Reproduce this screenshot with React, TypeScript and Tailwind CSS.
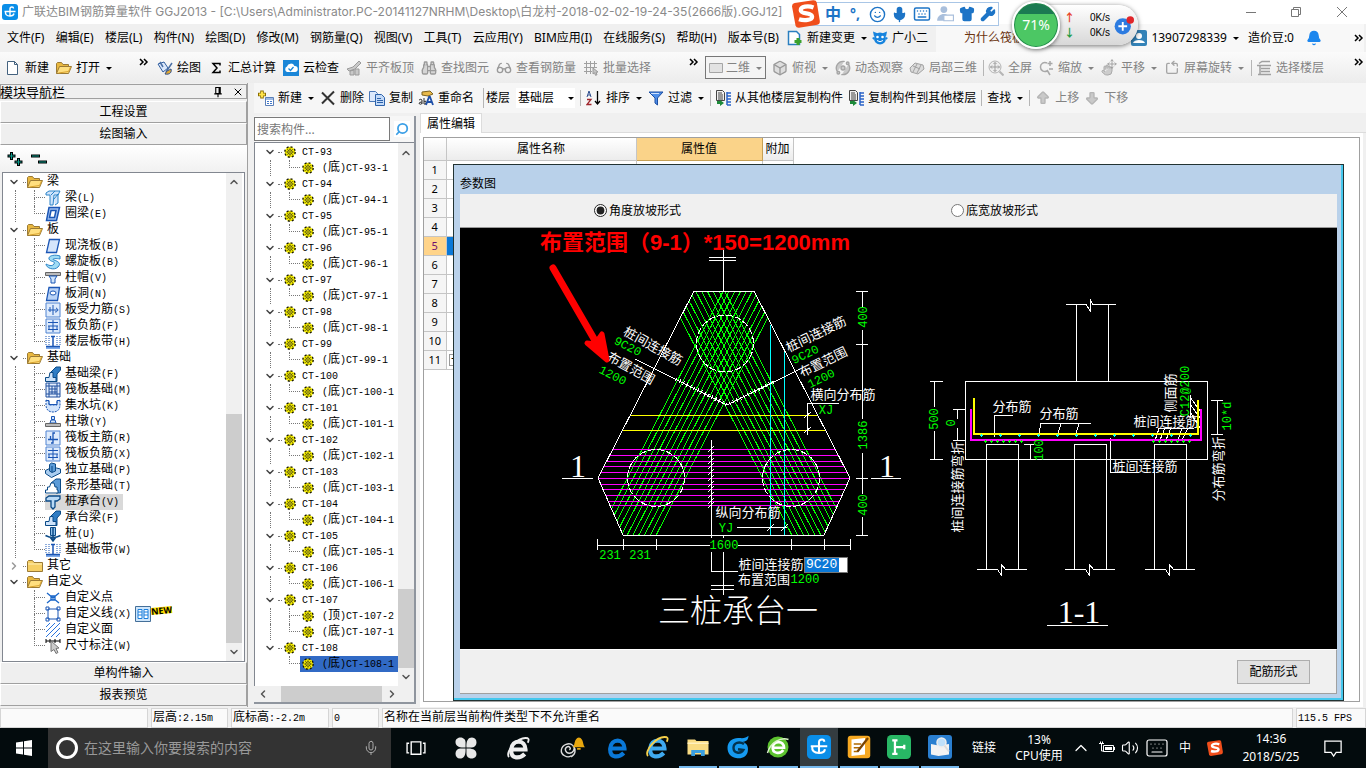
import type { ReactNode } from 'react';
import {
  ArrowBigDown,
  ArrowBigUp,
  Bell,
  Binoculars,
  Box,
  ChevronDown,
  ChevronLeft,
  ChevronRight,
  ChevronUp,
  Glasses,
  Hand,
  Keyboard,
  Mic,
  Move,
  Orbit,
  RotateCcwSquare,
  Search,
  Shirt,
  Smile,
  Volume2,
  Wrench,
  X,
} from 'lucide-react';

/* ---------- shared bits ---------- */

const Ico = ({ children, size = 16 }: { children: ReactNode; size?: number }) => (
  <svg width={size} height={size} viewBox="0 0 16 16" className="shrink-0" fill="none" aria-hidden="true">
    {children}
  </svg>
);

const Caret = () => (
  <svg width="9" height="8" viewBox="0 0 9 8" className="shrink-0" aria-hidden="true">
    <path d="M2 3h6L5 6z" fill="currentColor" />
  </svg>
);

const More = () => (
  <svg width="10" height="8" viewBox="0 0 10 8" className="shrink-0" fill="none" stroke="#000" strokeWidth="1.5" aria-hidden="true">
    <path d="M1 1l3 3-3 3M5 1l3 3-3 3" />
  </svg>
);

// Latin runs are set smaller so that they take half the width of a Chinese glyph.
const Mono = ({ text }: { text: string }) => (
  <span className="block whitespace-pre font-['Liberation_Mono','Noto_Sans_CJK_SC',monospace] text-xs leading-4">
    {text.split(/([ -~]+)/).map((part, i) =>
      /^[ -~]+$/.test(part) ? (
        <span key={i} className="text-[10px]">
          {part}
        </span>
      ) : (
        part
      ),
    )}
  </span>
);

interface ToolProps {
  icon?: ReactNode;
  label: string;
  muted?: boolean;
  caret?: boolean;
}

const Tool = ({ icon, label, muted, caret }: ToolProps) => (
  <button type="button" className={`flex shrink-0 items-center gap-1 whitespace-nowrap ${muted ? 'text-[#838383]' : 'text-black'}`}>
    {icon}
    <span>{label}</span>
    {caret && <Caret />}
  </button>
);

const Divider = () => <span className="h-4 w-px shrink-0 bg-[#b5b5b5]" />;

/* ---------- application icons ---------- */

const AppLogo = ({ size = 16 }: { size?: number }) => (
  <Ico size={size}>
    <rect width="16" height="16" rx="3" fill="#0a8ee8" />
    <path d="M2.5 7.5h11M8 12V5q0-2 2-2 1.500 0 1.500 1.500M3.500 7.500q-.5 4.500 4.500 4.500 3.500 0 4-2.500" stroke="#fff" strokeWidth="1.4" />
  </Ico>
);

const SogouLogo = ({ size = 28 }: { size?: number }) => (
  <Ico size={size}>
    <path d="M0 3.5Q0 2 1.5 1.7L12 .2Q13.800 0 14.200 1.500L15.900 12Q16 13.800 14.500 14.200L4 15.900Q2.400 16 2 14.500z" fill="#f04e1b" />
    <path d="M12.300 4.300C9 3 5 3.800 5 5.800c0 2.600 6.500 1 6.500 3.700 0 2-4.500 2.500-7.500 1.500" stroke="#fff" strokeWidth="2.400" />
  </Ico>
);

const NewDoc = () => (
  <Ico>
    <path d="M2.5 1.5h7l3 3v10h-10z" fill="#fff" stroke="#44627f" />
    <path d="M9.5 1.5v3h3" stroke="#44627f" />
  </Ico>
);

const OpenFolder = () => (
  <Ico>
    <path d="M.5 13.5v-10l1-1h4l1.5 2h5.5v3" fill="#e9b840" stroke="#9b7a35" />
    <path d="M.5 13.5l3-7h12l-3 7z" fill="#ffdf7f" stroke="#9b7a35" />
    <path d="M2.500 13l10-1.500 2-4.500" stroke="#d9a32e" />
  </Ico>
);

const ClosedFolder = () => (
  <Ico>
    <path d="M.5 13.5v-10l1-1h4l1.5 2h8.5v9z" fill="#f6cf64" stroke="#9b7a35" />
    <path d="M1 6h14" stroke="#fff0b8" />
  </Ico>
);

const Bucket = () => (
  <Ico>
    <path d="M1 4l6-2 4 6-5 4z" fill="#dbe8fb" stroke="#2f5d9f" />
    <path d="M3 2l3 5M15 3L9 12" stroke="#4a6fa5" strokeWidth="1.5" />
    <path d="M8 14c1-3 4-4 6-5 1 3-1 6-6 5z" fill="#e0a832" stroke="#31508a" />
  </Ico>
);

const CloudCheck = () => (
  <Ico>
    <rect width="16" height="16" fill="#1a86d8" />
    <path d="M4 12a3 3 0 010-5.500 4 4 0 017.500-.5 3 3 0 01.500 6z" fill="#fff" />
    <path d="M5.500 8.500l2 2 3-3.500" stroke="#1a86d8" strokeWidth="1.300" />
  </Ico>
);

const SlabTop = () => (
  <Ico>
    <path d="M1 9l6-2 6-6 2 2-6 6-6 2zM4 15v-4l4-1v5zM9 15V9h4v6z" fill="#c9c9c9" stroke="#9b9b9b" />
  </Ico>
);

const BatchGrid = () => (
  <Ico>
    <path d="M1 3.5h13M1 7.5h13M1 11.5h8M3.5 1v13M7.5 1v13M11.5 1v7" stroke="#a0a0a0" />
    <path d="M10 8l5 4-2 .3 1 2.500-1.500.500-1-2.500L10 14z" fill="#c5c5c5" stroke="#999" />
  </Ico>
);

const MagnifyMove = () => (
  <Ico>
    <circle cx="7" cy="7" r="6" stroke="#b5b5b5" fill="#eee" />
    <path d="M7 2.500v9M2.500 7h9M5.500 4L7 2.500 8.500 4M5.500 10L7 11.500 8.500 10M4 5.500L2.500 7 4 8.500M10 5.500L11.500 7 10 8.500" stroke="#9d9d9d" />
    <path d="M11.500 11.500l4 4" stroke="#b5b5b5" strokeWidth="2" />
  </Ico>
);

const StackLines = () => (
  <Ico>
    <path d="M3 3.500l3-2h8M1 5.500h14M5 8.500h9M5 11.500h9M2 14.500h13M4 6v8" stroke="#a0a0a0" strokeWidth="1.5" />
  </Ico>
);

const AddRow = () => (
  <Ico>
    <path d="M4 .500v8M0 4.500h8" stroke="#8a6d00" strokeWidth="3.500" />
    <path d="M4 1.500v6M1 4.500h6" stroke="#ffe34a" strokeWidth="2" />
    <path d="M7.500 7.500h8v8h-8z" fill="#fff" stroke="#5b7fb8" />
    <path d="M8 9h7M9 11.500h2M12 11.500h2M9 13.500h2M12 13.500h2" stroke="#3f76c9" />
  </Ico>
);

const CopyPages = () => (
  <Ico>
    <path d="M.5 1.5h6l2 2v8h-8z" fill="#dce9fc" stroke="#4a78b8" />
    <path d="M6.500 4.500h6l3 3v8h-9z" fill="#c3daf8" stroke="#2d62aa" />
    <path d="M8 8.500h4M8 10.500h6M8 12.500h6" stroke="#2d62aa" />
  </Ico>
);

const Rename = () => (
  <Ico>
    <path d="M4 2l8-1 3 3-5 2-6-1z" fill="#e8b94a" stroke="#7b611f" />
    <path d="M1 10q2-1.500 3 0v4M4 12q-3 0-3 1.500Q2.500 15 4 13.500M6 8v6q2 1 2-1.500T6 11.500" stroke="#333" />
    <path d="M8 15l3-8h1l3 8M9 12h5" stroke="#1e4fa8" strokeWidth="1.800" />
  </Ico>
);

const SortAz = () => (
  <Ico>
    <path d="M1 7l2-6 2 6M2 5h2.500" stroke="#2e4e8e" />
    <path d="M1 9.500h4l-4 5h4.500" stroke="#a0262c" strokeWidth="1.300" />
    <path d="M11.500 1v12M9 11l2.500 3L14 11" stroke="#000" strokeWidth="1.300" />
  </Ico>
);

const Funnel = () => (
  <Ico>
    <path d="M1 2h14l-5.500 6v7L7 13V8z" fill="#4d8de8" stroke="#1c4fa3" />
    <path d="M3 3.500h8" stroke="#cfe2ff" />
  </Ico>
);

const FloorCopy = () => (
  <Ico>
    <path d="M1.500.5h6l2 2v8h-8z" fill="#eee" stroke="#444" />
    <path d="M3 3h4M3 5h5M3 7h5M3 9h5" stroke="#444" />
    <path d="M12 2v13M12 3h4M12 6h4M12 9h4M12 12h4M12 15h4" stroke="#2a63c8" strokeWidth="1.500" />
    <path d="M2 11v3h3v2l4-3-4-3v1z" fill="#1d8a3a" />
  </Ico>
);

const Gear = () => (
  <svg width="12" height="12" viewBox="0 0 12 12" className="shrink-0" fill="none" aria-hidden="true">
    <circle cx="6" cy="6" r="5.2" fill="#f6ee00" stroke="#1a1900" strokeWidth="1.4" strokeDasharray="2 2.080" />
    <path d="M6 1.500v9M1.500 6h9M3 3l6 6M9 3l-6 6" stroke="#4d4a00" strokeWidth=".6" />
    <circle cx="6" cy="6" r="2.200" fill="#fff600" stroke="#222" strokeWidth=".8" />
    <circle cx="6" cy="6" r=".8" fill="#222" />
  </svg>
);

const Battery = () => (
  <Ico>
    <path d="M4.500 5.500h10v6h-10z" stroke="#fff" />
    <path d="M6 7h7v3H6zM15 7h1v3h-1z" fill="#fff" />
    <path d="M0 3.500h5M1.500 1.500v2M3.500 1.500v2M2.500 4v7H5" stroke="#fff" />
  </Ico>
);

const B = '#1b56b5';

const TREE_ICONS: Record<string, ReactNode> = {
  beam: <path d="M1 3l3-2h11l-2 4H9l-1 10H5V5H1zM6 5l4-4M9 9l4-5v9l-3 2" fill="#cfe4fb" stroke="#2c84c8" />,
  ring: <path d="M4 1.500h10.500l-3 13H1.500zM6 4.500h5l-1.500 7h-5z" fill="#9fc0f2" fillRule="evenodd" stroke={B} strokeWidth="1.500" />,
  slab: <path d="M4.500 1.500h10l-3 13h-10z" fill="#d5e5fb" stroke={B} strokeWidth="1.300" />,
  spiral: <path d="M15 2C9 0 3 2 4 5s7 2 5 5-6 1-8 0c0 4 8 7 12 3s-1-6-4-7 1-2 6-1z" fill="#9fdcf5" stroke="#2c84c8" />,
  cap: (
    <>
      <path d="M.5 2.500h15v3H.5z" fill="#bbb" stroke="#666" />
      <path d="M4 6h8l-2 3v4H6V9z" fill="#cfe4fb" stroke={B} />
    </>
  ),
  hole: (
    <>
      <path d="M4 1.500h10.500l-2 13h-11z" fill="#b9d3f7" stroke={B} strokeWidth="1.300" />
      <ellipse cx="8" cy="7" rx="3" ry="2" fill="#fff" stroke={B} />
    </>
  ),
  bar: (
    <>
      <path d="M1 1h14v14H1z" fill="#deebfc" stroke="#4f83d1" />
      <path d="M3 8h10M5 5v5M8 3v10M11 6c3 1 2 4-1 4" stroke={B} />
    </>
  ),
  main: (
    <>
      <path d="M1 1h14v14H1z" fill="#deebfc" stroke="#4f83d1" />
      <path d="M3 9.500h10M5.500 6v3.500M10 3H8v10H6" stroke={B} strokeWidth="1.300" />
    </>
  ),
  neg: (
    <>
      <path d="M1 1h14v14H1z" fill="#deebfc" stroke="#4f83d1" />
      <path d="M3 4.500h10M3 11.500h10M3 8h10M8 2v12M4 8v3M12 8v3" stroke={B} />
    </>
  ),
  band: (
    <>
      <path d="M1 12h14v3H1z" fill="#7faae8" />
      <path d="M1 2v10M4 2v10M12 2v10M15 2v10" stroke={B} strokeDasharray="1 1" />
      <path d="M8 2v10M6 2.500h4M1 12.500h14" stroke={B} strokeWidth="1.500" />
    </>
  ),
  found: (
    <>
      <path d="M5 7l6-6h4.500v3L12 8v7.500H8z" fill="#2f7cc4" stroke="#0b4a86" />
      <path d="M.5 15.500v-4H4l1-5h3v5h3v4z" fill="#cfe4fb" stroke="#0b4a86" />
    </>
  ),
  raft: <path d="M1 1h14v14H1zM4 1v14M12 1v14M1 4h14M1 12h14M7 4v8M10 4v8M4 7h8M4 10h8" fill="#e3eefd" stroke="#1f4f9e" />,
  pit: (
    <>
      <path d="M1 2v5c0 5 3 7 7 7s7-2 7-7V2l-3 1v4H4V3z" fill="#d2e4fb" stroke={B} strokeDasharray="2 1" />
      <path d="M1 2.500h3v4h8v-4h3" stroke={B} />
    </>
  ),
  pier: (
    <>
      <path d="M5 9l1-3h4l1 3zM6.500 2.500h3v3h-3z" fill="#cfe4fb" stroke={B} />
      <path d="M.5 9.500h15v3H.5z" fill="#bbb" stroke="#666" />
    </>
  ),
  pad: (
    <>
      <path d="M.5 8.500l5-2.500h6l4 1v4l-9 4.500-6-4z" fill="#a9cdf0" stroke="#0b4a86" />
      <path d="M4.500 9V2.500l2-1.500 4 1V9L7 10.500zM7 4v6" fill="#5b9bd8" stroke="#0b4a86" />
    </>
  ),
  strip: (
    <>
      <path d="M6 5l5-4h4.500v14H11z" fill="#5b9bd8" stroke="#0b4a86" />
      <path d="M.5 15v-3h2V9h2l1.500-4h3l1 4h2v3h1v3z" fill="#fff" stroke="#0b4a86" />
    </>
  ),
  pile: <path d="M1 4l3-2h11v3l-3 2h-2v6l-2 2-2-2V7H1z" fill="#b9d9f5" stroke="#0b4a86" strokeWidth="1.300" />,
  drop: (
    <>
      <path d="M5.500 1.500h5v8h-5z" fill="#8cc0ec" stroke="#0b4a86" />
      <path d="M8 1v14M.5 9.500q7.500 4 15 0M5 11l3 4 3-4" stroke="#0b4a86" strokeWidth="1.500" />
    </>
  ),
  point: <path d="M2 3l12 10M14 3L2 13M6 6h4v4H6z" stroke="#1b67c9" strokeWidth="1.300" />,
  line: <path d="M3 3h10v10H3zM1 1h3v3H1zM12 1h3v3h-3zM1 12h3v3H1zM12 12h3v3h-3z" fill="#fff" stroke={B} />,
  face: <path d="M1 5l4-4M1 10l9-9M1 15L15 1M6 15l9-9M11 15l4-4" stroke="#2a74dd" />,
  dim: (
    <>
      <path d="M1 1v4M15 1v4M1 3h14M5 1v4M10 1v4" stroke="#000" />
      <path d="M6 3l8 7-3 .5 2 4-2 1-2-4-3 2z" fill="#ccc" stroke="#777" />
    </>
  ),
};

/* ---------- data ---------- */

const MENUS = ['文件(F)', '编辑(E)', '楼层(L)', '构件(N)', '绘图(D)', '修改(M)', '钢筋量(Q)', '视图(V)', '工具(T)', '云应用(Y)', 'BIM应用(I)', '在线服务(S)', '帮助(H)', '版本号(B)'];

interface TreeGroup {
  name: string;
  open: boolean;
  items: [string, string][];
}

const TREE: TreeGroup[] = [
  { name: '梁', open: true, items: [['梁(L)', 'beam'], ['圈梁(E)', 'ring']] },
  {
    name: '板',
    open: true,
    items: [['现浇板(B)', 'slab'], ['螺旋板(B)', 'spiral'], ['柱帽(V)', 'cap'], ['板洞(N)', 'hole'], ['板受力筋(S)', 'bar'], ['板负筋(F)', 'neg'], ['楼层板带(H)', 'band']],
  },
  {
    name: '基础',
    open: true,
    items: [
      ['基础梁(F)', 'found'],
      ['筏板基础(M)', 'raft'],
      ['集水坑(K)', 'pit'],
      ['柱墩(Y)', 'pier'],
      ['筏板主筋(R)', 'main'],
      ['筏板负筋(X)', 'neg'],
      ['独立基础(P)', 'pad'],
      ['条形基础(T)', 'strip'],
      ['桩承台(V)', 'pile'],
      ['承台梁(F)', 'found'],
      ['桩(U)', 'drop'],
      ['基础板带(W)', 'band'],
    ],
  },
  { name: '其它', open: false, items: [] },
  { name: '自定义', open: true, items: [['自定义点', 'point'], ['自定义线(X)', 'line'], ['自定义面', 'face'], ['尺寸标注(W)', 'dim']] },
];

const COMPONENTS = Array.from({ length: 16 }, (_, i) => {
  const name = `CT-${93 + i}`;
  return { name, children: name === 'CT-107' ? [`(顶)${name}-2`, `(底)${name}-1`] : [`(底)${name}-1`] };
});

/* ---------- title, menu and tool bars ---------- */

const TitleBar = () => (
  <div className="flex h-6 shrink-0 items-center bg-white pl-0.5">
    <AppLogo />
    <h1 className="ml-1 flex-1 truncate font-['Inter','Noto_Sans_CJK_SC',sans-serif] text-xs text-[#8a8a8a]">
      广联达BIM钢筋算量软件 GGJ2013 - [C:\Users\Administrator.PC-20141127NRHM\Desktop\白龙村-2018-02-02-19-24-35(2666版).GGJ12]
    </h1>
    <div className="flex text-[#777]">
      <button type="button" aria-label="最小化" className="flex w-[45px] justify-center">
        <Ico><path d="M3 8.5h10" stroke="currentColor" /></Ico>
      </button>
      <button type="button" aria-label="还原" className="flex w-[45px] justify-center">
        <Ico><path d="M3.5 5.5h7v7h-7zM5.5 5.5v-2h7v7h-2" stroke="currentColor" /></Ico>
      </button>
      <button type="button" aria-label="关闭" className="flex w-12 justify-center">
        <Ico><path d="M3 3l10 10M13 3L3 13" stroke="currentColor" /></Ico>
      </button>
    </div>
  </div>
);

const MenuBar = () => (
  <div className="flex h-7 shrink-0 items-center whitespace-nowrap pl-[7px] pr-0.5 text-xs">
    <nav className="flex w-[780px] shrink-0 justify-between pr-2">
      {MENUS.map((m) => (
        <button key={m} type="button">{m}</button>
      ))}
    </nav>
    <div className="flex items-center gap-1">
      <Tool
        caret
        label="新建变更"
        icon={
          <Ico>
            <path d="M1.5 1.5h8l3 3v10h-11z" fill="#fff" stroke="#2a7fc0" strokeWidth="1.5" />
            <path d="M11 8v7M7.5 11.5h7" stroke="#3ba22c" strokeWidth="3" />
          </Ico>
        }
      />
      <Tool
        label="广小二"
        icon={
          <Ico>
            <circle cx="8" cy="8.500" r="6" fill="#1683dd" />
            <path d="M1 1.500l5 2-4 3zM15 1.500l-5 2 4 3zM0 8l2-1v3zM16 8l-2-1v3z" fill="#1683dd" />
            <circle cx="5.500" cy="7" r="1.300" fill="#fff" />
            <circle cx="10.500" cy="7" r="1.300" fill="#fff" />
            <path d="M5 10.500q3 2.500 6 0" stroke="#fff" />
          </Ico>
        }
      />
    </div>
    <div className="ml-2 flex h-full flex-1 items-center bg-[#f8f8f8] pl-7">
      <a href="#tips" className="text-[#6b3410]">为什么筏板</a>
    </div>
    <div className="flex h-full items-center gap-1 bg-[#f8f8f8]">
      <Tool
        caret
        label="13907298339"
        icon={
          <Ico>
            <rect width="16" height="16" rx="2" fill="#3483b8" />
            <path d="M2 13c1-4 11-4 12 0zM8 3a3 3 0 010 6 3 3 0 010-6z" fill="#fff" />
          </Ico>
        }
      />
      <span className="ml-1">造价豆:0</span>
      <Bell className="ml-2 size-4 fill-[#1b86ee] text-[#1b86ee]" />
      <span className="ml-7"><More /></span>
    </div>
  </div>
);

const ToolBar = () => (
  <div className="flex h-[31px] shrink-0 items-center overflow-hidden bg-gradient-to-b from-[#fbfbfb] to-[#ececec] text-xs">
    <div className="flex w-[157px] shrink-0 items-center gap-[7px] pl-[5px]">
      <Tool label="新建" icon={<NewDoc />} />
      <Tool label="打开" icon={<OpenFolder />} caret />
      <span className="ml-auto mr-2 mb-3"><More /></span>
    </div>
    <div className="flex w-[548px] shrink-0 items-center gap-[7px]">
      <Tool label="绘图" icon={<Bucket />} />
      <Tool label="汇总计算" icon={<Ico><path d="M12 5.500V3.500H5L9 8l-4 4.500h7v-2" stroke="#000" strokeWidth="1.500" /></Ico>} />
      <Tool label="云检查" icon={<CloudCheck />} />
      <Tool muted label="平齐板顶" icon={<SlabTop />} />
      <Tool muted label="查找图元" icon={<Binoculars className="size-4 fill-[#d5d5d5] text-[#9a9a9a]" />} />
      <Tool muted label="查看钢筋量" icon={<Glasses className="size-4 text-[#9a9a9a]" />} />
      <Tool muted label="批量选择" icon={<BatchGrid />} />
      <span className="ml-auto mr-[6px] mb-3"><More /></span>
    </div>
    <div className="flex flex-1 items-center gap-1.5 whitespace-nowrap">
      <button type="button" className="flex h-[23px] w-[61px] shrink-0 items-center border border-[#777] bg-[#f4f4f4] pl-0.5 text-[#838383]">
        <Ico><path d="M1.5 3.5h13v9h-13z" fill="#e2e2e2" stroke="#a5a5a5" /></Ico>
        <span className="ml-0.5 mr-1">二维</span>
        <Caret />
      </button>
      <Tool muted caret label="俯视" icon={<Box className="size-4 fill-[#dedede] text-[#9a9a9a]" />} />
      <Tool muted label="动态观察" icon={<Orbit className="size-4 fill-[#c9c9c9] text-[#a5a5a5]" />} />
      <Tool
        muted
        label="局部三维"
        icon={<Ico><path d="M1 8l5-5 8 2 1 4-6 5-7-2zM4 6l7 3M8 4l-4 8M12 5L8 13" fill="#dcdcdc" stroke="#a2a2a2" /></Ico>}
      />
      <div className="flex border-l border-[#b5b5b5] pl-1">
        <Tool muted label="全屏" icon={<MagnifyMove />} />
      </div>
      <Tool
        muted
        caret
        label="缩放"
        icon={<Ico><path d="M9 11a4.500 4.500 0 110-8M9 10l3 5M12 1v5M9.500 3.500h5M11 9h4" stroke="#a8a8a8" strokeWidth="1.500" /></Ico>}
      />
      <Tool
        muted
        caret
        label="平移"
        icon={
          <span className="relative flex size-4">
            <Hand className="mt-1 size-3 fill-[#ccc] text-[#aaa]" />
            <Move className="absolute -top-px right-0 size-2.5 text-[#999]" />
          </span>
        }
      />
      <Tool muted caret label="屏幕旋转" icon={<RotateCcwSquare className="size-4 text-[#a5a5a5]" />} />
      <div className="flex border-l border-[#b5b5b5] pl-1">
        <Tool muted label="选择楼层" icon={<StackLines />} />
      </div>
      <span className="ml-auto mr-0.5 mb-3"><More /></span>
    </div>
  </div>
);

const ComponentBar = () => (
  <div className="flex h-[30px] shrink-0 items-center gap-[5px] overflow-hidden bg-[#f6f6f6] pl-1 text-xs">
    <Tool caret label="新建" icon={<AddRow />} />
    <Tool label="删除" icon={<Ico><path d="M2 2.5l12 12M14 1.5l-12 12" stroke="#333" strokeWidth="2" /></Ico>} />
    <Tool label="复制" icon={<CopyPages />} />
    <Tool label="重命名" icon={<Rename />} />
    <label className="ml-1 flex shrink-0 items-center gap-1.5 border-l border-[#b5b5b5] pl-0.5">
      楼层
      <span className="flex h-5 items-center bg-white">
        <select defaultValue="基础层" className="w-[50px] appearance-none bg-white pl-0.5 text-xs outline-none">
          <option>基础层</option>
        </select>
        <Caret />
      </span>
    </label>
    <Divider />
    <Tool caret label="排序" icon={<SortAz />} />
    <Tool caret label="过滤" icon={<Funnel />} />
    <div className="flex border-l border-[#b5b5b5] pl-1">
      <Tool label="从其他楼层复制构件" icon={<FloorCopy />} />
    </div>
    <Tool label="复制构件到其他楼层" icon={<FloorCopy />} />
    <Divider />
    <Tool caret label="查找" />
    <Divider />
    <Tool muted label="上移" icon={<ArrowBigUp className="size-4 fill-[#c9c9c9] text-[#b5b5b5]" />} />
    <Tool muted label="下移" icon={<ArrowBigDown className="size-4 fill-[#c9c9c9] text-[#b5b5b5]" />} />
  </div>
);

/* ---------- left navigation ---------- */

const NavButton = ({ label }: { label: string }) => (
  <button type="button" className="h-[22px] w-full shrink-0 border border-[#a0a0a0] border-l-white border-t-white bg-[#efefef] text-xs leading-5">
    {label}
  </button>
);

const Elbow = ({ last }: { last: boolean }) => (
  <span className="flex h-4 w-[11px] shrink-0 flex-col">
    <span className="h-2 border-b border-l border-dotted border-[#777]" />
    <span className={`h-2 ${last ? '' : 'border-l border-dotted border-[#777]'}`} />
  </span>
);

const NavTree = () => (
  <ul className="min-w-0 flex-1 overflow-hidden pt-px">
    {TREE.map((group, gi) => (
      <li key={group.name}>
        <div className="flex h-4 items-center pl-[5px]">
          {group.open ? <ChevronDown className="size-3 text-[#444]" strokeWidth={3} /> : <ChevronRight className="size-3 text-[#999]" strokeWidth={3} />}
          <span className="ml-[3px] mr-px h-px w-[3px] border-b border-dotted border-[#777]" />
          <div className="flex gap-1">
            {group.open ? <OpenFolder /> : <ClosedFolder />}
            <Mono text={group.name} />
          </div>
        </div>
        <ul>
          {group.items.map(([label, icon], i) => (
            <li key={label} className="flex h-4 items-center pl-3">
              <span className={`h-4 w-[19px] shrink-0 ${gi < 3 ? 'border-l border-dotted border-[#777]' : ''}`} />
              <Elbow last={i === group.items.length - 1} />
              <button type="button" className={`flex h-4 items-center gap-1 pr-1 ${label === '桩承台(V)' ? 'bg-[#d9d9d9]' : ''}`}>
                <Ico>{TREE_ICONS[icon]}</Ico>
                <Mono text={label} />
              </button>
              {label === '自定义线(X)' && (
                <>
                  <Ico>
                    <path d="M.5.5h15v15H.5z" fill="#cfe6fb" stroke="#446f99" />
                    <path d="M3 3.5h4v9H3zM9 3.5h4v9H9zM3 6h4M3 9h4M9 6h4M9 9h4" stroke="#1b7fdc" fill="#fff" />
                  </Ico>
                  <span className="mb-2 -rotate-6 bg-[#ffdf00] text-[9px] leading-[7px] font-bold">NEW</span>
                </>
              )}
            </li>
          ))}
        </ul>
      </li>
    ))}
  </ul>
);

const LeftNav = () => (
  <aside className="flex w-[248px] shrink-0 flex-col border-r border-[#a0a0a0] bg-[#f0f0f0] pt-px">
    <header className="mb-0.5 flex h-[15px] items-center border border-[#a0a0a0] text-[13px] leading-3">
      <h2 className="-ml-px flex-1">模块导航栏</h2>
      <button type="button" aria-label="固定" className="mr-2">
        <Ico size={12}><path d="M5 2h6v8H5zM9.5 2v8M3 10.5h10M8 10v5" stroke="#000" strokeWidth="1.5" /></Ico>
      </button>
      <button type="button" aria-label="关闭导航" className="mr-0.5"><X className="size-3" strokeWidth={2} /></button>
    </header>
    <NavButton label="工程设置" />
    <NavButton label="绘图输入" />
    <div className="flex h-[27px] shrink-0 items-center gap-2 bg-gradient-to-b from-white to-[#f1f1f1] pl-[7px]">
      <button type="button" aria-label="全部展开">
        <Ico><path d="M4.5 1v8M.5 5h8M11.5 7v8M7.5 11h8" stroke="#000" strokeWidth="3" /><path d="M4.5 2v6M1.5 5h6M11.5 8v6M8.5 11h6" stroke="#0a9a8a" /></Ico>
      </button>
      <button type="button" aria-label="全部折叠">
        <Ico><path d="M0 5h9M7 11h9" stroke="#000" strokeWidth="3" /><path d="M1 5h7M8 11h7" stroke="#0a9a8a" /></Ico>
      </button>
    </div>
    <div className="mx-0.5 flex min-h-0 flex-1 border border-[#828790] bg-white">
      <NavTree />
      <div className="mr-0.5 flex w-4 shrink-0 flex-col items-center bg-[#f0f0f0]">
        <ChevronUp className="my-[3px] size-3 text-[#555]" strokeWidth={3} />
        <div className="flex-1" />
        <div className="h-[229px] w-full bg-[#cdcdcd]" />
        <ChevronDown className="my-[3px] size-3 text-[#555]" strokeWidth={3} />
      </div>
    </div>
    <NavButton label="单构件输入" />
    <NavButton label="报表预览" />
    <div className="h-px" />
  </aside>
);

/* ---------- component list ---------- */

const ComponentList = () => (
  <section className="mt-[3px] mb-[3px] flex w-[162px] shrink-0 flex-col border-r-2 border-b-2 border-[#8f959e] bg-white">
    <div className="flex h-[26px] shrink-0 items-center bg-[#f6f6f6]">
      <input aria-label="搜索构件" placeholder="搜索构件..." className="h-6 w-[136px] border border-[#7a7a7a] bg-white px-0.5 text-xs outline-none placeholder:text-[#777]" />
      <button type="button" aria-label="搜索" className="mx-auto bg-white p-px">
        <Search className="size-[14px] -scale-x-100 text-[#3b9fe6]" strokeWidth={3} />
      </button>
    </div>
    <div className="flex min-h-0 flex-1 border border-r-0 border-b-0 border-[#828790]">
      <ul className="min-w-0 flex-1 overflow-hidden pt-px">
        {COMPONENTS.map((c, ci) => (
          <li key={c.name}>
            <div className="flex h-4 items-center pl-[9px]">
              <ChevronDown className="size-3 text-[#444]" strokeWidth={3} />
              <span className="mx-0.5 h-px w-1 border-b border-dotted border-[#777]" />
              <div className="flex items-center gap-[6px]">
                <Gear />
                <Mono text={c.name} />
              </div>
            </div>
            {c.children.map((child, i) => {
              const selected = ci === COMPONENTS.length - 1;
              return (
                <div key={child} className="flex h-4 items-center pl-[15px]">
                  <span className={`h-4 w-[19px] shrink-0 ${selected ? '' : 'border-l border-dotted border-[#777]'}`} />
                  <Elbow last={i === c.children.length - 1} />
                  <button type="button" className={`flex h-4 flex-1 items-center gap-2 pl-0.5 ${selected ? 'bg-[#316ac5]' : ''}`}>
                    <Gear />
                    <Mono text={child} />
                  </button>
                </div>
              );
            })}
          </li>
        ))}
      </ul>
      <div className="flex w-4 shrink-0 flex-col items-center bg-[#f0f0f0]">
        <ChevronUp className="my-1 size-3 text-[#555]" strokeWidth={3} />
        <div className="flex-1" />
        <div className="h-[79px] w-full bg-[#cdcdcd]" />
        <ChevronDown className="my-[3px] size-3 text-[#555]" strokeWidth={3} />
      </div>
    </div>
    <div className="flex h-4 shrink-0 items-center bg-[#f0f0f0] pl-[3px] pr-4">
      <ChevronLeft className="mr-3 size-3 text-[#555]" strokeWidth={3} />
      <div className="h-full flex-1 bg-[#cdcdcd]" />
      <ChevronRight className="ml-1 size-3 text-[#555]" strokeWidth={3} />
    </div>
  </section>
);

/* ---------- parameter drawing ---------- */

const GREEN = '#00ff00';

interface LabelProps {
  x: number;
  y: number;
  children: string;
  fill?: string;
  size?: number;
  rotate?: number;
}

// Centred text on the drawing; y is the middle of the glyphs.
const Label = ({ x, y, children, fill = '#fff', size = 13, rotate = 0 }: LabelProps) => (
  <text
    x={x}
    y={y + size * 0.36}
    fontSize={size}
    fill={fill}
    textAnchor="middle"
    transform={rotate ? `rotate(${rotate} ${x} ${y})` : undefined}
    stroke="none"
  >
    {children}
  </text>
);

const OUTLINE = '694,291 754,291 850,478 824,535 623,535 598,478';
const HATCH = Array.from({ length: 11 }, (_, i) => 652 + i * 5.8);
const RINGS = [449, 455, 461, 466, 472, 478, 484, 489, 495, 501, 505];

const PlanView = () => (
  <g>
    <clipPath id="cap-outline">
      <polygon points={OUTLINE} />
    </clipPath>
    <g clipPath="url(#cap-outline)">
      {HATCH.map((x) => (
        <g key={x} stroke={GREEN}>
          <path d={`M${x - 62} 551L${x + 77} 280`} />
          <path d={`M${1448 - x + 62} 551L${1448 - x - 77} 280`} />
        </g>
      ))}
      {RINGS.map((y) => (
        <path key={y} d={`M590 ${y + 0.5}H860`} stroke="#ff00ff" />
      ))}
    </g>
    <path d="M630 415.5H818" stroke="#ffff00" />
    <path d="M622 430.5H826" stroke="#ffff00" />
    <path d="M770.5 325V535M784.5 351V535" stroke="#00ffff" />
    <g stroke="#fff">
      <polygon points={OUTLINE} />
      <circle cx="725" cy="343.5" r="28.5" strokeDasharray="7 2" />
      <circle cx="656" cy="478" r="28.5" strokeDasharray="7 2" />
      <circle cx="791" cy="478" r="28.5" strokeDasharray="7 2" />
      <path d="M723.5 250V291M709 257.5H736M709 260.5H736" />
      <path d="M635 359L727 405L800 369" />
      <path d="M676 379L727 405L773 382" strokeWidth="4" strokeDasharray="1 3" />
      <path d="M711.5 440V538M711.5 552V571.5H738M723.5 535V538M723.5 552V595M711 585.5H734M711 589.5H734" />
      {RINGS.map((y) => (
        <path key={y} d={`M708 ${y + 3}l6 -6`} />
      ))}
      <path d="M562 478.5H593M871 478.5H901" />
      <path d="M862.5 291V307M862.5 330V419M862.5 453V494M862.5 517V535" />
      <path d="M856 291.5H868M856 344.5H868M856 478.5H868M856 535.5H868" />
      <path d="M597 545.5H710M738 545.5H850M597.5 539V550M623.5 539V550M656.5 539V550M791.5 539V550M824.5 539V550M850.5 539V550" />
      <path d="M839 403.5H807.5V435M804 418l7-6M804 433l7-6M737 527.5H787M767 531l7-7M781 531l7-7" />
    </g>
    <Label x={653} y={346} rotate={29}>桩间连接筋</Label>
    <Label x={628} y={346} rotate={27} fill={GREEN} size={12}>9C20</Label>
    <Label x={631} y={368} rotate={29}>布置范围</Label>
    <Label x={613} y={375} rotate={27} fill={GREEN} size={12}>1200</Label>
    <Label x={816} y={334} rotate={-26}>桩间连接筋</Label>
    <Label x={805} y={354} rotate={-26} fill={GREEN} size={12}>9C20</Label>
    <Label x={823} y={362} rotate={-26}>布置范围</Label>
    <Label x={821} y={378} rotate={-26} fill={GREEN} size={12}>1200</Label>
    <Label x={843} y={394}>横向分布筋</Label>
    <Label x={826} y={410} fill={GREEN} size={12}>XJ</Label>
    <Label x={748} y={512}>纵向分布筋</Label>
    <Label x={726} y={528} fill={GREEN} size={12}>YJ</Label>
    <Label x={863} y={317} rotate={-90} fill={GREEN} size={12}>400</Label>
    <Label x={863} y={435} rotate={-90} fill={GREEN} size={12}>1386</Label>
    <Label x={863} y={505} rotate={-90} fill={GREEN} size={12}>400</Label>
    <Label x={724} y={545} fill={GREEN} size={12}>1600</Label>
    <Label x={610} y={555} fill={GREEN} size={12}>231</Label>
    <Label x={640} y={555} fill={GREEN} size={12}>231</Label>
    <Label x={771} y={564}>桩间连接筋</Label>
    <Label x={764} y={579}>布置范围</Label>
    <Label x={805} y={579} fill={GREEN} size={12}>1200</Label>
    <g fontFamily="Liberation Serif, serif">
      <Label x={578} y={465} size={32}>1</Label>
      <Label x={887} y={465} size={32}>1</Label>
    </g>
    <g fontWeight="300">
      <Label x={738} y={610} size={32}>三桩承台一</Label>
    </g>
  </g>
);

const SectionView = () => (
  <g>
    <g stroke="#fff">
      <path d="M1076.5 304V381M1108.5 304V381M1066 304.5H1086l4 6v-11l3 5H1116" />
      <path d="M965.5 381.5H1207.5V459.5H965.5z" />
      {[986.5, 1074.5, 1154.5].map((x) => (
        <g key={x}>
          <path d={`M${x} 569V444.5h32V569`} />
          <path d={`M${x - 10} 569.5h21l4 6v-11l4 5h21`} />
        </g>
      ))}
      <path d="M934.5 381V407M934.5 431V460M930 381.5H943M930 459.5H943" />
      <path d="M957.5 409V419M957.5 428V440M953 409.5H965M953 440.5H965" />
      <path d="M1030.5 444V460M1024 444.5H1034M1024 459.5H1034" />
      <path d="M1217.5 400V434M1211 400.5H1223M1211 434.5H1223" />
      <path d="M994.5 437V415.5H1013M1039 434l2-11H1091M1058 434l3-11M1076 434l3-11" />
      <path d="M1110.5 438V472.5H1139" />
      <path d="M1194 428.5H1159l-4 12M1165 428l-5 12M1171 428l-5 12M1182 428l-4 12M1188 428l-6 12" />
      <path d="M1190.5 395V418M1190 397l10 14M1190 404l10 14M1190 412l10 16" />
    </g>
    <path d="M974 398V434H1198V400" stroke="#ffff00" strokeWidth="2" />
    <path d="M971 409V440H1201V409" stroke="#ff00ff" strokeWidth="2" />
    {Array.from({ length: 12 }, (_, i) => (
      <path key={i} d={`M${980 + i * 19} 435.5h3M${981.5 + i * 19} 434v3`} stroke="#00ffff" />
    ))}
    {Array.from({ length: 7 }, (_, i) => (
      <path key={i} d={`M${984 + i * 6} 441.5h3m-1.5-1.5v3M${1152 + i * 6} 441.5h3m-1.5-1.5v3`} stroke={GREEN} />
    ))}
    <Label x={1012} y={406}>分布筋</Label>
    <Label x={1059} y={413}>分布筋</Label>
    <Label x={1166} y={421}>桩间连接筋</Label>
    <Label x={1145} y={466}>桩间连接筋</Label>
    <Label x={957} y={487} rotate={-90}>桩间连接筋弯折</Label>
    <Label x={1218} y={469} rotate={-90}>分布筋弯折</Label>
    <Label x={1170} y={393} rotate={-90}>侧面筋</Label>
    <Label x={1185} y={391} rotate={-90} fill={GREEN} size={12}>C12@200</Label>
    <Label x={934} y={419} rotate={-90} fill={GREEN} size={12}>500</Label>
    <Label x={951} y={423} rotate={-90} fill={GREEN} size={12}>0</Label>
    <Label x={1039} y={450} rotate={-90} fill={GREEN} size={12}>100</Label>
    <Label x={1227} y={416} rotate={-90} fill={GREEN} size={12}>10*d</Label>
    <g fontFamily="Liberation Serif, serif">
      <Label x={1079} y={611} size={32}>1-1</Label>
    </g>
    <path d="M1047 625.5H1108" stroke="#fff" />
  </g>
);

const ParameterDialog = () => (
  <div role="dialog" aria-label="参数图" className="absolute top-[51px] right-[22px] bottom-[6px] left-[33px] flex flex-col border border-[#233] bg-[#b9d1ea] px-[6px] pb-[6px] shadow-[inset_-2px_-2px_0_#45c8ee]">
    <h2 className="flex h-[29px] shrink-0 items-end pb-0.5 text-xs">参数图</h2>
    <div role="radiogroup" aria-label="放坡形式" className="flex h-[34px] shrink-0 items-center border-b border-[#999] bg-[#f0f0f0] text-xs">
      <label className="ml-[134px] flex w-[357px] items-center gap-0.5">
        <input type="radio" name="slope" defaultChecked className="m-0 size-[13px] accent-[#222]" />
        角度放坡形式
      </label>
      <label className="flex items-center gap-0.5">
        <input type="radio" name="slope" className="m-0 size-[13px]" />
        底宽放坡形式
      </label>
    </div>
    <div className="relative min-h-0 flex-1 overflow-hidden bg-black">
      <svg
        width="876"
        height="421"
        viewBox="460 228 876 421"
        fill="none"
        shapeRendering="crispEdges"
        fontFamily="'Liberation Mono', 'Noto Sans CJK SC', monospace"
      >
        <PlanView />
        <SectionView />
        <text x="540" y="250" fill="#ff0000" fontSize="22" fontWeight="700" fontFamily="'Liberation Sans', 'Noto Sans CJK SC', sans-serif">
          布置范围（9-1）*150=1200mm
        </text>
        <g shapeRendering="auto" stroke="#ff0000" fill="#ff0000" strokeLinecap="round" strokeLinejoin="round">
          <path d="M553 268L597 344" strokeWidth="7" />
          <path d="M587 343l8 1 7-10 5 26z" strokeWidth="5" />
        </g>
      </svg>
      <input
        aria-label="桩间连接筋"
        defaultValue="9C20"
        className="absolute top-[329px] left-[344px] h-4 w-11 border border-[#777] bg-gradient-to-r from-[#0a78d7] from-80% to-white to-80% px-px font-['Liberation_Mono',monospace] text-[13px] text-white outline-none"
      />
    </div>
    <div className="flex h-[45px] shrink-0 items-center justify-end border-t border-r border-b border-[#a0a0a0] border-t-white bg-[#f0f0f0] pr-[26px]">
      <button type="button" className="h-6 w-[73px] border border-[#adadad] bg-[#e1e1e1] text-xs">配筋形式</button>
    </div>
  </div>
);

const PropertyPane = () => (
  <section className="relative ml-1 flex min-w-0 flex-1 flex-col">
    <div className="flex h-5 shrink-0 items-center border-b border-[#dcdcdc]">
      <button type="button" className="-mb-px h-5 w-[62px] border border-b-0 border-[#dcdcdc] bg-white text-xs">属性编辑</button>
    </div>
    <div className="mr-[3px] flex min-h-0 flex-1 flex-col bg-white px-[3px] pt-1 pb-[5px]">
      <div className="flex-1 border border-[#a0a0a0]">
        <table className="table-fixed border-collapse text-xs">
          <thead>
            <tr className="h-[22px] bg-gradient-to-b from-white to-[#ececec]">
              <th className="w-[22px] border-r border-b border-[#c5c5c5] p-0" />
              <th className="w-[190px] border-r border-b border-[#c5c5c5] p-0 font-normal">属性名称</th>
              <th className="w-[126px] border-r border-b border-[#c5a055] bg-[#fad389] p-0 font-normal">属性值</th>
              <th className="w-[31px] border-r border-b border-[#c5c5c5] p-0 font-normal">附加</th>
            </tr>
          </thead>
          <tbody>
            {Array.from({ length: 11 }, (_, i) => (
              <tr key={i} className="h-[19px]">
                <th
                  scope="row"
                  className={`border-r border-b border-[#c5c5c5] p-0 text-[11px] leading-4 font-normal ${i === 4 ? 'bg-[#ffd48a] text-[#701070]' : 'bg-[#f5f5f5]'}`}
                >
                  {i + 1}
                </th>
                <td className={`border-r border-b border-[#c5c5c5] p-0 ${i === 4 ? 'bg-[#0a78d7]' : ''}`}>
                  {i === 10 && <span className="ml-0.5 block size-3 border border-[#999] text-center leading-2">+</span>}
                </td>
                <td className="border-r border-b border-[#c5c5c5] p-0" />
                <td className="border-r border-b border-[#c5c5c5] p-0" />
              </tr>
            ))}
          </tbody>
        </table>
      </div>
    </div>
    <ParameterDialog />
  </section>
);

/* ---------- bottom bars ---------- */

const StatusBar = () => (
  <footer className="flex h-[21px] shrink-0 items-stretch gap-[3px] bg-[#f0f0f0] pt-px leading-4 *:flex *:items-center *:border *:border-[#d5d5d5] *:bg-[#fafafa] *:pl-px">
    <div className="w-[148px]" />
    <div className="w-[77px]"><Mono text="层高:2.15m" /></div>
    <div className="w-[98px]"><Mono text="底标高:-2.2m" /></div>
    <div className="w-[47px]"><Mono text="0" /></div>
    <div className="flex-1"><Mono text="名称在当前层当前构件类型下不允许重名" /></div>
    <div className="w-[70px]"><Mono text="115.5 FPS" /></div>
  </footer>
);

const EGlyph = ({ color, orbit }: { color: string; orbit?: string }) => (
  <Ico size={24}>
    <path d="M3.5 9H13c0-7-9-7-9.5 0s6 6 9 3" stroke={color} strokeWidth="2.8" />
    {orbit && <path d="M2 14C-1 11 8 0 14.500 1.500c1 .5.500 2 0 3" stroke={orbit} strokeWidth="1.200" />}
  </Ico>
);

const TASKS: { name: string; icon: ReactNode; open?: boolean; active?: boolean }[] = [
  { name: 'Edge', icon: <EGlyph color="#0a78d7" /> },
  { name: 'Internet Explorer', icon: <EGlyph color="#3fa9ee" orbit="#f7d04a" /> },
  {
    name: '文件资源管理器',
    open: true,
    icon: <Ico size={24}><path d="M1 3h5l1 1h8v9H1z" fill="#f9dc83" /><path d="M1 5.500h14" stroke="#fff1be" /><path d="M3.500 14v-4h9v4h-2.500v-2H6v2z" fill="#3a9fe0" /></Ico>,
  },
  {
    name: 'G',
    open: true,
    icon: (
      <Ico size={24}>
        <path d="M15 .5c0 3-2 4-4 4 3.500 1 4 4 3.500 6.500C14 14 11 16 7.500 15.500 3 15 1 12 1 8.500 1 4 5 1.500 9 2c2.500.3 4.500 0 6-1.500z" fill="#159af0" />
        <path d="M12 6c-3-2-7-1-7 2.500s4.500 4.500 6.500 1.500L8 9.500" stroke="#04344f" strokeWidth="1.600" />
      </Ico>
    ),
  },
  {
    name: '360浏览器',
    open: true,
    icon: <Ico size={24}><circle cx="8" cy="8" r="7" fill="#5cc22e" /><path d="M4.500 8.500h7.500c0-5-7-5-7.500-.5s5 5 7 2" stroke="#fff" strokeWidth="1.800" /><path d="M1 12C3 5 10 1 15 3" stroke="#d9f2c8" /></Ico>,
  },
  { name: '广联达', open: true, active: true, icon: <AppLogo size={24} /> },
  {
    name: '便笺',
    open: true,
    icon: <Ico size={24}><rect x=".5" y=".5" width="15" height="15" rx="2" fill="#f6a821" /><path d="M3 3l9-1v11l-9 1z" fill="#fff" /><path d="M4.500 6h5M4.500 8.500h4M4.500 11h3" stroke="#b06a00" /><path d="M7 11l7-9" stroke="#7a4300" strokeWidth="1.500" /></Ico>,
  },
  {
    name: '造价',
    open: true,
    icon: <Ico size={24}><rect width="16" height="16" rx="3" fill="#28b765" /><path d="M3.500 3.500h3.500M3.500 12.500h3.500M5.300 3.500v9M5.300 8H12M11.500 6.500v3" stroke="#fff" strokeWidth="1.500" /></Ico>,
  },
  {
    name: '查看器',
    open: true,
    icon: <Ico size={24}><rect width="16" height="16" rx="2" fill="#2a7fd0" /><path d="M2 6l5 1v7l-5-1zM14 6L7 7v7l7-1z" fill="#f3f3f3" /><circle cx="9" cy="5" r="3" fill="#bfe0fa" stroke="#eee" /><path d="M11 7l3 4" stroke="#ddd" strokeWidth="1.300" /></Ico>,
  },
];

const Taskbar = () => (
  <div className="flex h-10 shrink-0 items-center bg-[#030b0d] text-xs text-white">
    <button type="button" aria-label="开始" className="flex w-12 shrink-0 justify-center">
      <Ico><path d="M0 2.500L7 1.500V7.500H0zM8 1.300L16 0V7.500H8zM0 8.500H7V14.500L0 13.500zM8 8.500H16V16L8 14.700z" fill="#fff" /></Ico>
    </button>
    <label className="flex h-full w-[343px] shrink-0 items-center bg-[#333] pl-2">
      <span className="size-[22px] shrink-0 rounded-full border-[3px] border-white" />
      <input aria-label="搜索" placeholder="在这里输入你要搜索的内容" className="ml-1.5 min-w-0 flex-1 bg-transparent text-sm outline-none placeholder:text-[#999]" />
      <Mic className="mr-3 size-4 text-[#aaa]" strokeWidth={1.5} />
    </label>
    <button type="button" aria-label="任务视图" className="flex w-[50px] shrink-0 justify-center">
      <Ico size={22}><path d="M4.5 3.5h7v9h-7zM3 4.5H1.5v7H3M13 4.5h1.5v7H13" stroke="#fff" /></Ico>
    </button>
    <button type="button" aria-label="风车" className="flex w-[50px] shrink-0 justify-center">
      <Ico size={24}>
        <path d="M7.700 7.700C3 8 1 6.500 1 4c0-4 6.500-4 6.700 0zM8.300 7.700C8 3 9.500 1 12 1c4 0 4 6.500 0 6.700zM8.300 8.300C13 8 15 9.500 15 12c0 4-6.500 4-6.700 0zM7.700 8.300C8 13 6.500 15 4 15c-4 0-4-6.500 0-6.700z" fill="#e8e8e8" />
      </Ico>
    </button>
    <button type="button" aria-label="浏览器" className="flex w-[53px] shrink-0 justify-center"><EGlyph color="#eee" orbit="#eee" /></button>
    <button type="button" aria-label="提醒" className="flex w-[53px] shrink-0 justify-center">
      <Ico size={28}>
        <path d="M7 9c1.500-.5 0-2.500-1.500-1.500S5 11 7 11s4-2.500 2-4.500S3 6 2.500 9s3.500 5 5.500 3.500M9.500 7c1.500 2 1 5-1.500 6" stroke="#ddd" strokeWidth=".8" />
        <path d="M9 7.500c1.500-1 .5-5 3.500-5.500 3 .5 2 4.500 3.500 5.500zM11.500 8h2v1h-2z" fill="#e8a70e" />
      </Ico>
    </button>
    <div className="flex h-full w-[363px] shrink-0">
      {TASKS.map((t) => (
        <button
          key={t.name}
          type="button"
          aria-label={t.name}
          className={`mx-px flex flex-1 items-center justify-center border-b-2 ${t.open ? 'border-[#76b9ed]' : 'border-transparent'} ${t.active ? 'bg-[#343c40]' : ''}`}
        >
          {t.icon}
        </button>
      ))}
    </div>
    <span className="ml-3 shrink-0">链接</span>
    <div className="ml-4 w-[54px] shrink-0 text-center leading-4">
      <p>13%</p>
      <p>CPU使用</p>
    </div>
    <div className="ml-auto flex shrink-0 items-center">
      <ChevronUp className="size-5" strokeWidth={1.5} />
      <span className="ml-2"><Battery /></span>
      <Volume2 className="ml-1.5 size-[18px]" strokeWidth={1.5} />
      <Keyboard className="ml-1.5 size-6" strokeWidth={1.2} />
      <span className="ml-2.5 mr-4">中</span>
      <SogouLogo size={16} />
      <div className="ml-4 mr-5 w-16 text-center leading-[18px]">
        <p>14:36</p>
        <p>2018/5/25</p>
      </div>
      <Ico size={20}><path d="M1.5 2.5h13v9h-4l-2 3-2-3h-5z" stroke="#fff" /></Ico>
      <span className="w-[23px]" />
    </div>
  </div>
);

/* ---------- floating windows ---------- */

const ImeBar = () => (
  <div className="absolute top-0 left-[792px] flex items-center">
    <span className="z-10"><SogouLogo /></span>
    <div className="-ml-3.5 flex h-6 items-center gap-[5px] border border-[#a9c6e6] bg-white pl-[18px] pr-0.5 text-[#1d74c6]">
      <span className="w-4 text-center text-base leading-5 font-bold">中</span>
      <span className="w-[18px] text-center text-sm leading-5 font-bold">°,</span>
      <Smile className="size-[17px]" strokeWidth={2} />
      <Mic className="size-[17px] fill-[#1d74c6]" strokeWidth={2} />
      <Keyboard className="size-[18px]" strokeWidth={2} />
      <Ico size={18}><circle cx="7" cy="4" r="3" fill="#a9bfdc" /><path d="M1 14c0-8 12-8 12 0z" fill="#a9bfdc" /><path d="M7 9h8.5v5H7z" fill="#fff" stroke="#a9bfdc" /></Ico>
      <Shirt className="size-4 fill-[#1d74c6]" />
      <Wrench className="size-4 fill-[#1d74c6]" />
    </div>
  </div>
);

const SpeedBall = () => (
  <div className="absolute top-px left-[1012px] flex items-center">
    <div className="z-10 flex size-12 items-center justify-center rounded-full border-2 border-white bg-gradient-to-b from-[#1b7a52] from-25% to-[#4cc764] to-26% text-sm text-white shadow-[0_1px_4px_#0008,inset_0_0_0_1px_#248a4c]">
      71%
    </div>
    <div className="-ml-10 flex h-10 w-[118px] items-center rounded-full bg-gradient-to-b from-white to-[#d8d8d8] pl-11 text-[11px] leading-[15px] shadow-[0_1px_5px_#0008]">
      <div className="w-3 font-bold">
        <p className="text-[#e8472b]">↑</p>
        <p className="text-[#1f9b45]">↓</p>
      </div>
      <div className="ml-3.5 whitespace-nowrap font-['Liberation_Sans',sans-serif] text-[10px] leading-[15px]">
        <p>0K/s</p>
        <p>0K/s</p>
      </div>
      <span className="ml-1">
        <Ico size={20}>
          <circle cx="7" cy="9" r="6.5" fill="#2c7be0" />
          <path d="M7 5.5v7M3.5 9h7" stroke="#fff" strokeWidth="1.5" />
          <circle cx="13" cy="4" r="3" fill="#e0252a" />
        </Ico>
      </span>
    </div>
  </div>
);

export default function App() {
  return (
    <div className="relative flex h-screen flex-col overflow-hidden bg-[#f0f0f0] font-['Noto_Sans','Noto_Sans_CJK_SC',sans-serif] text-black">
      <TitleBar />
      <MenuBar />
      <ToolBar />
      <main className="flex min-h-0 flex-1">
        <LeftNav />
        <div className="ml-[6px] flex min-w-0 flex-1 flex-col">
          <ComponentBar />
          <div className="flex min-h-0 flex-1 overflow-hidden">
            <ComponentList />
            <PropertyPane />
          </div>
        </div>
      </main>
      <StatusBar />
      <Taskbar />
      <ImeBar />
      <SpeedBall />
    </div>
  );
}
